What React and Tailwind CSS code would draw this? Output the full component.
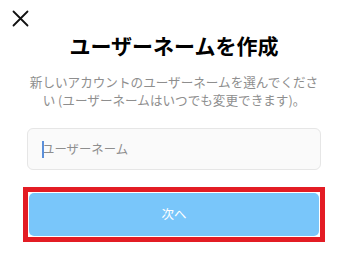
export default function App() {
  return (
    <div className="w-[340px] h-[256px] bg-white overflow-hidden" style={{ fontFamily: '"Noto Sans CJK JP", "Noto Sans", sans-serif' }}>
      <div className="pt-[10px] pl-[12px] leading-none">
        <svg className="block" width="17" height="17" viewBox="0 0 17 17" fill="none" stroke="#111" strokeWidth="1.8" strokeLinecap="round">
          <path d="M1.5 1.5 L15.5 15.5 M15.5 1.5 L1.5 15.5" />
        </svg>
      </div>
      <div className="pl-[8px]">
        <h1 className="mt-[4px] text-center text-[21px] leading-[28px] font-bold text-black">ユーザーネームを作成</h1>
        <p className="mx-[19px] mt-[14px] text-center text-[12.6px] leading-[18px] text-[#8e8e8e]">
          新しいアカウントのユーザーネームを選んでください (ユーザーネームはいつでも変更できます)。
        </p>
        <div className="relative mx-[19px] mt-[19px] h-[42px] rounded-[6px] border border-[#e6e6e6] bg-[#fafafa] flex items-center pl-[14px]">
          <span className="absolute left-[14px] top-[12px] h-[17px] w-[1.5px] bg-[#5b8fd9]" />
          <span className="text-[12.4px] text-[#8e8e8e]">ユーザーネーム</span>
        </div>
        <div className="mx-[15px] mt-[17px] border-[5px] border-[#e31c24] p-[1px] bg-white">
          <button className="w-full h-[43px] rounded-[5px] bg-[#79c6fa] text-white text-[12.5px] flex items-center justify-center">
            次へ
          </button>
        </div>
      </div>
    </div>
  );
}
